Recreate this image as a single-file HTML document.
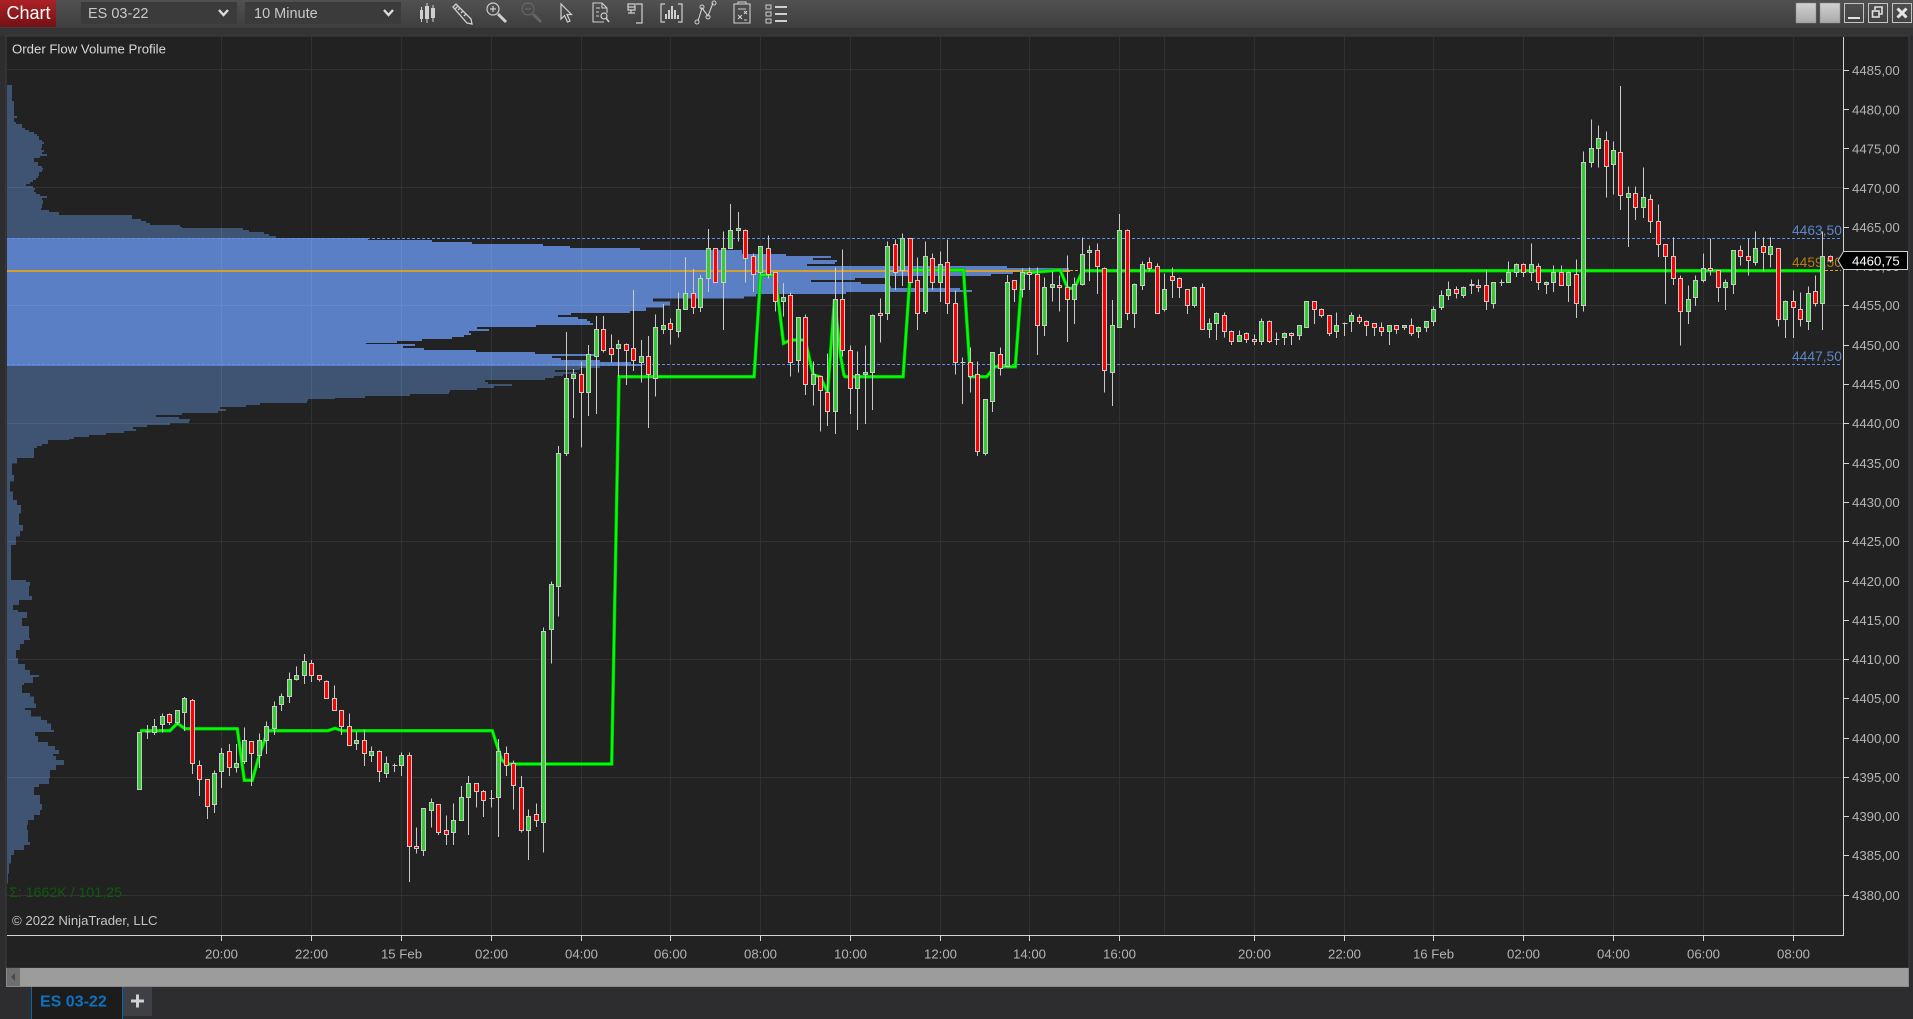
<!DOCTYPE html>
<html><head><meta charset="utf-8"><title>Chart</title>
<style>
html,body{margin:0;padding:0;width:1913px;height:1019px;overflow:hidden;background:#2d2d30}
svg{position:absolute;left:0;top:0;display:block}
text{font-family:"Liberation Sans",Arial,sans-serif}
.w{fill:none;stroke:#c9c9c9;stroke-width:1;vector-effect:non-scaling-stroke}
.g{fill:#32cd32;stroke:#c9c9c9;stroke-width:1;vector-effect:non-scaling-stroke}
.r{fill:#ff0000;stroke:#c9c9c9;stroke-width:1;vector-effect:non-scaling-stroke}
.ax{font-size:13.2px;fill:#b4b4b4}
.ic{fill:none;stroke:#cfcfcf;stroke-width:1.2}
</style></head><body>
<svg width="1913" height="1019" viewBox="0 0 1913 1019" xmlns="http://www.w3.org/2000/svg">
<defs>
<linearGradient id="tb" x1="0" y1="0" x2="0" y2="1"><stop offset="0" stop-color="#515151"/><stop offset="1" stop-color="#3e3e3e"/></linearGradient>
<linearGradient id="rd" x1="0" y1="0" x2="0" y2="1"><stop offset="0" stop-color="#ab2227"/><stop offset="1" stop-color="#741014"/></linearGradient>
<linearGradient id="bt" x1="0" y1="0" x2="0" y2="1"><stop offset="0" stop-color="#d2d2d2"/><stop offset="1" stop-color="#a8a8a8"/></linearGradient>
</defs>
<rect width="1913" height="1019" fill="#2d2d30"/>
<rect width="1913" height="28" fill="url(#tb)"/>
<rect y="28" width="1913" height="8" fill="#343436"/>
<!-- header -->
<rect width="56" height="27" fill="url(#rd)"/>
<text x="6.5" y="19" font-size="18" fill="#fff">Chart</text>
<rect x="81" y="2" width="156" height="22" fill="#3b3b3b"/>
<text x="88" y="18" font-size="14.5" fill="#c8c8c8">ES 03-22</text>
<path d="M219 10l4.500 5 4.500-5" fill="none" stroke="#dcdcdc" stroke-width="2.400"/>
<rect x="245" y="2" width="156" height="22" fill="#3b3b3b"/>
<text x="254" y="18" font-size="14.5" fill="#c8c8c8">10 Minute</text>
<path d="M384 10l4.500 5 4.500-5" fill="none" stroke="#dcdcdc" stroke-width="2.400"/>
<!-- toolbar icons -->
<g class="ic">
<path d="M421.500 7V22M427 3V23M433 5V22" stroke-width="1"/>
<rect x="420" y="10" width="3" height="9" fill="#cfcfcf" stroke="none"/><rect x="425" y="6" width="4" height="13" fill="#cfcfcf" stroke="none"/><rect x="431" y="8" width="4" height="10" fill="#cfcfcf" stroke="none"/>
<path d="M453 7l3-3 15 15 1 5-5-1z M455 9l3-3M458 10l2-2M461 13l2-2M464 16l2-2" stroke-width="1.300"/>
<circle cx="493" cy="9" r="6"/><path d="M490 9h6M493 6v6"/><path d="M498 14l8 8" stroke-width="3"/>
<g stroke="#666"><circle cx="528" cy="9" r="6"/><path d="M525 9h6"/><path d="M533 14l8 8" stroke-width="3"/></g>
<path d="M561 4v15l3.500-3.500 3 6.500 2.500-1-3-6.500h4.500z" stroke-width="1.200"/>
<path d="M604 22h-11V3h9l5 5v5M602 3v5h5M596 8h4M596 12h3M596 16h3" stroke-width="1.100"/><circle cx="604" cy="16" r="3" stroke-width="1.200"/><path d="M606 18l3 4" stroke-width="1.600"/>
<path d="M628 4h7v6h-7zM628 13h7M628 7h7M636 4h6v19h-6M631 10v3" stroke-width="1.200"/>
<path d="M665 4h-4v18h4M678 4h4v18h-4" stroke-width="1.200"/><path d="M666 19v-5M669 19v-9M672 19v-13M675 19v-9M678 19v-4" stroke-width="2"/>
<path d="M698 21l4-13 6 8 5-13" stroke-width="1.100"/><circle cx="697" cy="22" r="2" stroke-width="1"/><circle cx="702" cy="7" r="2" stroke-width="1"/><circle cx="708" cy="17" r="2" stroke-width="1"/><circle cx="714" cy="3" r="2" stroke-width="1"/>
<path d="M734 4h16v19h-16zM738 4V2h8v2M738 9l8 0M738 15l4 4M742 15l-4 4M744 11l3 3M747 11l-3 3M744 20h3" stroke-width="1.100"/>
<path d="M766 5h5v4h-5zM766 12h5v4h-5zM766 19h5v4h-5z" stroke-width="1"/><path d="M775 7h12M775 14h12M775 21h12" stroke-width="2"/>
</g>
<rect x="1796" y="3" width="20" height="20" fill="url(#bt)" stroke="#888" stroke-width=".5"/>
<rect x="1820" y="3" width="20" height="20" fill="url(#bt)" stroke="#888" stroke-width=".5"/>
<rect x="1844.500" y="3.500" width="19" height="19" fill="none" stroke="#c4c4c4"/><path d="M1848 18h12" stroke="#e0e0e0" stroke-width="2"/>
<rect x="1868.500" y="3.500" width="19" height="19" fill="none" stroke="#c4c4c4"/><path d="M1875 10V7h7v7h-3" fill="none" stroke="#e0e0e0" stroke-width="1.600"/><rect x="1872.500" y="11" width="6.500" height="6" fill="none" stroke="#e0e0e0" stroke-width="1.600"/>
<rect x="1892.500" y="3.500" width="19" height="19" fill="none" stroke="#c4c4c4"/><path d="M1897.500 8.500l9 9M1906.500 8.500l-9 9" stroke="#e4e4e4" stroke-width="3"/>
<!-- chart panel -->
<rect x="6" y="36" width="1903" height="932" fill="#222222" stroke="#3e3e3e" stroke-width="1"/>
<!-- volume profile -->
<g shape-rendering="crispEdges">
<path fill="#3f5373" transform="translate(0,60) scale(1,.33333)" d="M7 75H12V123H14V168H17V174H14V186H16V192H22V204H25V210H29V216H34V222H37V228H39V240H42V246H44V252H42V264H41V270H44V276H42V282H47V288H40V294H34V306H38V318H42V324H43V330H42V336H39V348H38V354H36V360H33V366H30V372H26V378H33V384H35V390H34V396H36V402H40V408H47V414H42V420H43V432H42V444H41V450H49V456H59V465H7Z"/>
<path fill="#3f5373" transform="translate(0,200) scale(1,.33333)" d="M7 45H132V57H141V63H146V69H150V75H180V81H182V84H243V90H249V96H264V102H269V108H276V114H7Z"/>
<path fill="#5a7fc5" transform="translate(0,200) scale(1,.33333)" d="M7 114H368V120H432V126H472V132H543V138H570V144H640V150H742V162H786V168H831V174H813V180H837V186H835V192H807V198H1007V204H1069V216H1013V222H991V228H885V234H855V240H811V246H861V252H885V258H891V264H960V270H972V276H846V282H756V290H744V296H653V304H670V316H664V322H646V333H630V339H571V345H558V351H578V357H587V363H590V369H593V375H536V381H477V387H489V393H469V399H471V405H464V411H452V417H422V423H397V429H366V432H415V438H403V444H424V450H476V456H535V462H595V468H552V474H561V480H600V486H631V492H642V498H7Z"/>
<path fill="#3f5373" transform="translate(0,200) scale(1,.33333)" d="M7 498H600V504H580V510H555V516H577V522H563V528H554V534H545V540H485V546H488V552H512V558H494V564H477V570H450V576H449V582H410V588H365V594H335V597H308V603H307V609H260V615H246V621H220V627H226V633H218V639H182V645H156V651H179V657H190V663H189V669H170V675H147V681H133V687H136V693H124V699H106V705H89V711H74V717H69V720H7Z"/>
<path fill="#3f5373" transform="translate(0,430) scale(1,.33333)" d="M7 30H48V42H42V48H37V54H34V84H17V100H12V135H14V155H10V185H13V210H17V225H21V250H19V285H23V303H20V320H16V345H11V450H26V456H30V468H29V498H32V510H19V525H13V540H18V546H27V564H22V588H29V624H30V630H24V642H20V660H16V684H18V702H25V720H30V735H39V741H33V759H24V765H22V789H30V800H34V820H36V834H25V840H31V860H41V870H47V880H51V900H54V906H35V918H38V936H48V948H55V960H59V972H53V978H56V990H64V1005H56V1020H50V1044H49V1062H39V1071H34V1095H40V1122H42V1140H40V1155H34V1170H28V1185H27V1200H28V1236H30V1245H24V1260H14V1275H11V1300H9V1330H8V1360H7Z"/>
<!-- grid -->
<path stroke="#ffffff" stroke-opacity=".07" stroke-width="1" fill="none" d="M7 69.500H1843M7 187.500H1843M7 305.500H1843M7 423.500H1843M7 541.500H1843M7 659.500H1843M7 777.500H1843M7 895.500H1843M221.500 37V935M311.500 37V935M401.500 37V935M491.500 37V935M581.500 37V935M670.500 37V935M760.500 37V935M850.500 37V935M940.500 37V935M1029.500 37V935M1119.500 37V935M1164.500 37V935M1254.500 37V935M1344.500 37V935M1433.500 37V935M1523.500 37V935M1613.500 37V935M1703.500 37V935M1793.500 37V935"/>
<!-- levels -->
<path d="M7 238.500H1841M7 364.500H1841" stroke="#5f8fe8" stroke-width="1" stroke-dasharray="3 2" fill="none"/>
<rect x="7" y="270" width="1063" height="2" fill="#d39f2d"/>
<path d="M1070 270.500H1841" stroke="#d39f2d" stroke-width="1" stroke-dasharray="3 2" fill="none"/>
</g>
<!-- labels under candles -->
<text x="1792" y="235" font-size="13.800" fill="#5c86cc">4463,50</text>
<text x="1792" y="267" font-size="13.800" fill="#b07d12">4459,50</text>
<text x="1792" y="361" font-size="13.800" fill="#5c86cc">4447,50</text>
<!-- green line -->
<polyline fill="none" stroke="#00b400" stroke-width="3.500" stroke-linejoin="miter" points="140,730.700 170,730.700 177.300,723.300 185,728.700 237.300,728.700 244.300,780.300 252.300,780.300 259.300,755 268,730.700 328,730.700 335,728.300 342.300,730.700 492.300,730.700 501.700,760 506.700,764 611.700,764 619,376.700 754.100,376.700 760.600,275 775.300,275 783.500,343.300 790.800,340 805.100,340 813.300,375 820.200,376.700 827.600,392.300 834.500,299.300 840.600,356 843.900,375 845,376.700 903.100,376.700 910.400,270 963.500,270 970.400,376.700 986.700,376.700 994.900,366.700 1015.300,366.700 1022.200,273.300 1060.200,270 1067.600,288.300 1074.500,288.300 1082.700,270.700 1821,270.700"/>
<polyline fill="none" stroke="#00ff00" stroke-width="2.200" stroke-linejoin="miter" points="140,730.700 170,730.700 177.300,723.300 185,728.700 237.300,728.700 244.300,780.300 252.300,780.300 259.300,755 268,730.700 328,730.700 335,728.300 342.300,730.700 492.300,730.700 501.700,760 506.700,764 611.700,764 619,376.700 754.100,376.700 760.600,275 775.300,275 783.500,343.300 790.800,340 805.100,340 813.300,375 820.200,376.700 827.600,392.300 834.500,299.300 840.600,356 843.900,375 845,376.700 903.100,376.700 910.400,270 963.500,270 970.400,376.700 986.700,376.700 994.900,366.700 1015.300,366.700 1022.200,273.300 1060.200,270 1067.600,288.300 1074.500,288.300 1082.700,270.700 1821,270.700"/>
<!-- candles -->
<g shape-rendering="crispEdges">
<g transform="translate(.5,640) scale(1,.33333)">
<path class="w" d="M147 255V297M154 237V285M162 220V278M169 220V255M177 211V255M184 171V273M192 177V402M199 361V468M207 418V537M214 391V519M221 324V444M229 312V408M236 312V397M244 262V372M251 304V438M259 280V384M266 244V342M274 184V285M281 160V213M289 97V189M296 79V121M304 42V132M311 60V126M319 106V125M326 121V175M334 136V211M341 211V285M349 220V316M356 274V330M364 268V378M371 319V366M379 331V426M386 349V414M394 370V396M401 337V408M409 337V726M416 562V640M423 505V648M431 475V562M438 493V585M446 526V615M453 490V615M461 438V541M468 408V585M476 430V502M483 450V531M491 450V502M498 297V591M506 319V408M513 361V508M521 408V578M528 508V660M536 490V561M145 276h5M392 376h5M489 475h5"/>
<path class="g" d="M137 277h4V449h-4zM152 259h4V277h-4zM160 229h4V254h-4zM175 211h4V248h-4zM182 175h4V218h-4zM212 400h4V494h-4zM219 340h4V394h-4zM234 370h4V382h-4zM242 301h4V364h-4zM257 301h4V346h-4zM264 259h4V301h-4zM272 199h4V265h-4zM279 169h4V193h-4zM287 118h4V169h-4zM294 106h4V118h-4zM302 64h4V106h-4zM354 301h4V310h-4zM369 334h4V346h-4zM384 370h4V400h-4zM399 346h4V376h-4zM421 505h4V631h-4zM429 487h4V511h-4zM451 541h4V577h-4zM459 472h4V541h-4zM466 430h4V472h-4zM496 334h4V472h-4zM526 529h4V571h-4z"/>
<path class="r" d="M167 223h4V248h-4zM190 181h4V370h-4zM197 376h4V418h-4zM205 418h4V499h-4zM227 334h4V382h-4zM249 304h4V340h-4zM309 70h4V106h-4zM317 106h4V118h-4zM324 124h4V175h-4zM332 176h4V211h-4zM339 211h4V259h-4zM347 259h4V316h-4zM362 301h4V340h-4zM377 334h4V394h-4zM407 346h4V619h-4zM414 619h4V625h-4zM436 493h4V577h-4zM444 571h4V583h-4zM474 430h4V454h-4zM481 454h4V481h-4zM504 340h4V376h-4zM511 370h4V436h-4zM519 442h4V571h-4zM534 523h4V541h-4z"/>
</g>
<g transform="translate(.5,200) scale(1,.33333)">
<path class="w" d="M543 1282V1958M551 1144V1391M558 738V1250M566 396V768M573 507V654M581 484V743M588 435V648M596 348V642M603 348V458M611 403V488M618 420V530M626 430V555M633 270V513M641 420V548M648 408V684M655 343V590M663 312V402M670 355V434M678 277V413M685 171V328M693 207V342M700 225V336M708 87V276M723 94V390M730 12V145M738 36V124M745 88V248M753 160V276M760 139V224M768 106V236M775 217V335M783 249V350M790 277V530M798 352V518M805 343V585M813 484V617M820 529V695M827 460V678M835 202V702M842 148V470M850 436V642M857 454V690M865 436V672M872 343V630M880 295V428M887 124V360M895 118V270M902 100V258M917 172V390M925 124V342M932 160V270M940 154V306M947 118V342M955 271V524M962 472V612M970 442V578M977 484V768M985 598V766M992 457V636M1000 442V526M1007 225V499M1014 241V306M1022 205V293M1029 202V270M1037 202V465M1044 232V408M1052 214V304M1059 226V335M1067 166V426M1074 232V372M1082 112V256M1089 136V243M1097 130V282M1104 202V578M1112 300V618M1119 42V382M1127 88V360M1134 250V384M1142 184V270M1149 172V214M1157 190V340M1164 220V334M1172 202V294M1179 232V294M1187 268V342M960 487h5"/>
<path class="g" d="M541 1295h4V1867h-4zM549 1153h4V1288h-4zM556 760h4V1159h-4zM564 535h4V761h-4zM571 523h4V535h-4zM586 463h4V577h-4zM594 388h4V470h-4zM616 433h4V445h-4zM639 469h4V488h-4zM653 382h4V536h-4zM661 376h4V388h-4zM676 328h4V395h-4zM683 280h4V328h-4zM698 235h4V322h-4zM706 145h4V235h-4zM721 145h4V247h-4zM728 91h4V145h-4zM736 85h4V91h-4zM758 139h4V217h-4zM781 292h4V304h-4zM796 352h4V481h-4zM811 523h4V553h-4zM833 298h4V634h-4zM855 523h4V565h-4zM863 517h4V523h-4zM870 346h4V517h-4zM885 139h4V340h-4zM900 115h4V211h-4zM923 169h4V334h-4zM938 193h4V247h-4zM983 598h4V760h-4zM990 457h4V604h-4zM1005 247h4V499h-4zM1020 217h4V268h-4zM1042 262h4V376h-4zM1050 253h4V262h-4zM1072 253h4V298h-4zM1080 163h4V253h-4zM1087 151h4V157h-4zM1110 376h4V517h-4zM1117 91h4V382h-4zM1132 253h4V340h-4zM1140 193h4V256h-4zM1162 268h4V328h-4z"/>
<path class="r" d="M579 523h4V577h-4zM601 388h4V452h-4zM609 445h4V464h-4zM624 433h4V452h-4zM631 445h4V482h-4zM646 469h4V524h-4zM668 370h4V388h-4zM691 280h4V322h-4zM713 145h4V247h-4zM743 91h4V175h-4zM751 169h4V223h-4zM766 145h4V223h-4zM773 217h4V304h-4zM788 286h4V487h-4zM803 352h4V553h-4zM818 529h4V571h-4zM825 577h4V634h-4zM840 298h4V451h-4zM848 451h4V565h-4zM878 340h4V346h-4zM893 133h4V217h-4zM908 115h4V247h-4zM915 241h4V340h-4zM930 175h4V247h-4zM945 187h4V310h-4zM953 310h4V487h-4zM968 487h4V529h-4zM975 523h4V754h-4zM998 463h4V505h-4zM1012 241h4V268h-4zM1027 217h4V223h-4zM1035 223h4V376h-4zM1057 256h4V262h-4zM1065 262h4V298h-4zM1095 151h4V199h-4zM1102 205h4V511h-4zM1125 91h4V340h-4zM1147 187h4V205h-4zM1155 199h4V340h-4zM1170 229h4V241h-4zM1177 235h4V262h-4zM1185 268h4V316h-4z"/>
</g>
<g transform="translate(.5,240) scale(1,.33333)">
<path class="w" d="M1194 139V202M1202 130V268M1209 235V294M1216 217V300M1224 217V292M1231 271V315M1239 271V304M1246 277V309M1254 283V315M1261 235V315M1269 241V309M1276 277V315M1284 277V315M1291 277V315M1299 256V300M1306 184V262M1314 184V252M1321 205V233M1329 226V288M1336 217V294M1344 247V288M1351 217V276M1359 223V252M1366 241V288M1374 250V288M1381 247V288M1389 256V315M1396 256V282M1404 256V270M1411 235V288M1418 259V294M1426 244V276M1433 199V258M1441 151V210M1448 124V180M1456 139V175M1463 139V174M1471 118V162M1478 118V156M1486 88V210M1493 127V205M1501 118V138M1508 64V127M1516 70V111M1523 70V111M1274 298h5M1342 250h5M1469 134h5M1469 137h5M1499 127h5"/>
<path class="g" d="M1192 142h4V196h-4zM1207 250h4V268h-4zM1214 220h4V250h-4zM1237 286h4V304h-4zM1259 244h4V304h-4zM1282 280h4V292h-4zM1297 256h4V286h-4zM1304 184h4V262h-4zM1334 256h4V274h-4zM1349 226h4V244h-4zM1387 256h4V274h-4zM1402 256h4V262h-4zM1416 262h4V274h-4zM1424 244h4V262h-4zM1431 208h4V244h-4zM1439 166h4V202h-4zM1446 148h4V166h-4zM1461 142h4V166h-4zM1491 127h4V190h-4zM1506 97h4V127h-4zM1514 73h4V97h-4z"/>
<path class="r" d="M1200 142h4V268h-4zM1222 226h4V274h-4zM1229 274h4V304h-4zM1244 280h4V298h-4zM1252 298h4V304h-4zM1267 244h4V304h-4zM1289 280h4V286h-4zM1312 184h4V208h-4zM1319 208h4V226h-4zM1327 226h4V280h-4zM1357 232h4V244h-4zM1364 244h4V256h-4zM1372 250h4V262h-4zM1379 262h4V274h-4zM1394 256h4V268h-4zM1409 256h4V280h-4zM1454 148h4V160h-4zM1476 136h4V142h-4zM1484 136h4V184h-4zM1521 73h4V97h-4z"/>
</g>
<g transform="translate(.5,80) scale(1,.33333)">
<path class="w" d="M1531 490V603M1538 550V630M1546 604V642M1553 556V636M1561 556V616M1568 574V666M1576 538V714M1583 214V695M1591 118V262M1598 136V262M1606 154V353M1613 184V343M1620 18V390M1628 319V501M1635 319V420M1643 262V414M1650 343V459M1658 373V531M1665 493V672M1673 472V615M1680 586V796M1688 616V732M1695 586V678M1703 520V608M1710 475V586M1718 571V666M1725 598V690M1733 511V642M1740 496V556M1748 475V586M1755 454V556M1763 472V574M1770 472V562M1778 505V739M1785 661V774M1793 631V774M1800 637V739M1808 619V750M1815 586V679M1822 454V750M1830 526V547"/>
<path class="g" d="M1529 553h4V577h-4zM1544 607h4V613h-4zM1551 577h4V607h-4zM1566 577h4V616h-4zM1581 247h4V676h-4zM1589 205h4V247h-4zM1596 175h4V205h-4zM1611 211h4V253h-4zM1626 340h4V352h-4zM1641 352h4V382h-4zM1686 658h4V694h-4zM1693 601h4V652h-4zM1701 565h4V601h-4zM1723 607h4V622h-4zM1731 511h4V613h-4zM1753 505h4V547h-4zM1768 499h4V523h-4zM1783 664h4V718h-4zM1806 640h4V724h-4zM1820 529h4V670h-4z"/>
<path class="r" d="M1536 559h4V607h-4zM1559 577h4V616h-4zM1574 583h4V670h-4zM1604 181h4V259h-4zM1618 217h4V346h-4zM1633 340h4V382h-4zM1648 358h4V424h-4zM1656 424h4V493h-4zM1663 493h4V529h-4zM1671 529h4V595h-4zM1678 595h4V694h-4zM1708 565h4V571h-4zM1716 571h4V622h-4zM1738 511h4V529h-4zM1746 529h4V541h-4zM1761 499h4V517h-4zM1776 505h4V718h-4zM1791 664h4V682h-4zM1798 688h4V718h-4zM1813 634h4V670h-4zM1828 529h4V541h-4z"/>
</g>
</g>
<!-- axes -->
<g shape-rendering="crispEdges" stroke="#d4d4d4" stroke-width="1" fill="none">
<path d="M1843.500 37V935.500H7"/>
<path d="M1844 70.500h5M1844 109.500h5M1844 148.500h5M1844 188.500h5M1844 227.500h5M1844 266.500h5M1844 305.500h5M1844 345.500h5M1844 384.500h5M1844 423.500h5M1844 463.500h5M1844 502.500h5M1844 541.500h5M1844 581.500h5M1844 620.500h5M1844 659.500h5M1844 698.500h5M1844 738.500h5M1844 777.500h5M1844 816.500h5M1844 855.500h5M1844 895.500h5"/>
<path d="M221.500 936v5M311.500 936v5M401.500 936v5M491.500 936v5M581.500 936v5M670.500 936v5M760.500 936v5M850.500 936v5M940.500 936v5M1029.500 936v5M1119.500 936v5M1254.500 936v5M1344.500 936v5M1433.500 936v5M1523.500 936v5M1613.500 936v5M1703.500 936v5M1793.500 936v5"/>
</g>
<g class="ax">
<text x="1852" y="75">4485,00</text><text x="1852" y="114.500">4480,00</text><text x="1852" y="153.500">4475,00</text><text x="1852" y="193">4470,00</text><text x="1852" y="232">4465,00</text><text x="1852" y="271">4460,00</text><text x="1852" y="310">4455,00</text><text x="1852" y="350">4450,00</text><text x="1852" y="389">4445,00</text><text x="1852" y="428">4440,00</text><text x="1852" y="468">4435,00</text><text x="1852" y="507">4430,00</text><text x="1852" y="546">4425,00</text><text x="1852" y="586">4420,00</text><text x="1852" y="625">4415,00</text><text x="1852" y="664">4410,00</text><text x="1852" y="703">4405,00</text><text x="1852" y="743">4400,00</text><text x="1852" y="782">4395,00</text><text x="1852" y="821">4390,00</text><text x="1852" y="860">4385,00</text><text x="1852" y="900">4380,00</text>
</g>
<g class="ax" text-anchor="middle">
<text x="221.500" y="958.500">20:00</text><text x="311.500" y="958.500">22:00</text><text x="401.500" y="958.500">15 Feb</text><text x="491.500" y="958.500">02:00</text><text x="581.500" y="958.500">04:00</text><text x="670.500" y="958.500">06:00</text><text x="760.500" y="958.500">08:00</text><text x="850.500" y="958.500">10:00</text><text x="940.500" y="958.500">12:00</text><text x="1029.500" y="958.500">14:00</text><text x="1119.500" y="958.500">16:00</text><text x="1254.500" y="958.500">20:00</text><text x="1344.500" y="958.500">22:00</text><text x="1433.500" y="958.500">16 Feb</text><text x="1523.500" y="958.500">02:00</text><text x="1613.500" y="958.500">04:00</text><text x="1703.500" y="958.500">06:00</text><text x="1793.500" y="958.500">08:00</text>
</g>
<!-- price marker -->
<polygon points="1838,260.500 1843.500,251.500 1907.500,251.500 1907.500,269.500 1843.500,269.500" fill="#000" stroke="#cfcfcf" stroke-width="1"/>
<text x="1852" y="265.500" font-size="13.200" fill="#fff">4460,75</text>
<!-- chart text -->
<text x="12" y="53.500" font-size="13.200" fill="#d8d8d8">Order Flow Volume Profile</text>
<text x="9" y="897" font-size="14.200" fill="#0b5c0b">Σ: 1662K / 101,25</text>
<text x="12" y="925" font-size="13.200" fill="#c6c6c6">© 2022 NinjaTrader, LLC</text>
<!-- scrollbar -->
<rect x="7" y="968" width="1901" height="18" fill="#9c9c9c"/>
<rect x="7" y="968" width="13" height="18" fill="#6e6e6e"/>
<path d="M11 977l4-4v8z" fill="#4a4a4a"/>
<path d="M6.500 968V986.500H1908.500V968" fill="none" stroke="#8a8a8a" stroke-width="1"/>
<!-- tabs -->
<rect x="31" y="987" width="91" height="32" fill="#1c1c1c"/>
<path d="M31.500 987V1019M122.500 987V1019" stroke="#0b67ab" stroke-width="1"/>
<text x="40" y="1006.500" font-size="16" font-weight="bold" fill="#0f72c0">ES 03-22</text>
<rect x="123" y="987" width="29" height="29" fill="#3f3f46"/>
<path d="M131 1001h13M137.500 994.500v13" stroke="#d0d0d0" stroke-width="3"/>
</svg>
</body></html>
